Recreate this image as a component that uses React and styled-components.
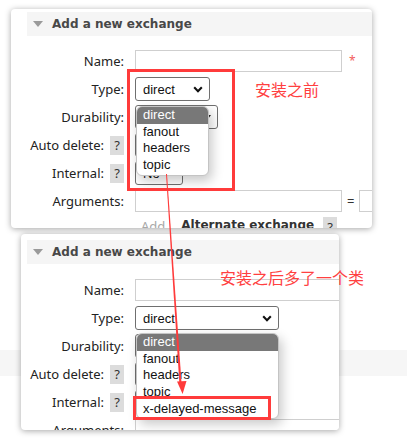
import React from 'react';
import styled, { createGlobalStyle } from 'styled-components';

const GlobalStyle = createGlobalStyle`
  html, body {
    margin: 0;
    padding: 0;
    background: #fff;
  }
  body {
    width: 407px;
    height: 447px;
    overflow: hidden;
  }
`;

const Canvas = styled.div`
  position: relative;
  width: 407px;
  height: 447px;
  overflow: hidden;
  background: #fff;
  font-family: "Noto Sans", "Liberation Sans", sans-serif;
`;

// strip of the page behind the second capture
const PageBand = styled.div`
  position: absolute;
  left: 0;
  right: 0;
  top: 350px;
  height: 26px;
  background: #f6f6f6;
`;

// one pasted capture of the management page
const Shot = styled.section`
  position: absolute;
  left: ${p => p.$x}px;
  top: ${p => p.$y}px;
  width: ${p => p.$w}px;
  height: ${p => p.$h}px;
  box-sizing: border-box;
  background: #fff;
  border-radius: 4px;
  box-shadow: 0 1px 6px rgba(0, 0, 0, 0.35);
  overflow: hidden;
`;

const Header = styled.h2`
  margin: ${p => p.$top}px 0 0 ${p => p.$left}px;
  height: 24px;
  display: flex;
  align-items: center;
  gap: 9px;
  padding-left: 6px;
  background: #f5f5f5;
  font: bold 12px "DejaVu Sans", Verdana, sans-serif;
  color: #484848;
  white-space: nowrap;
`;

const Caret = styled.span`
  width: 0;
  height: 0;
  border-left: 5px solid transparent;
  border-right: 5px solid transparent;
  border-top: 6px solid #9a9a9a;
`;

const Form = styled.div`
  display: grid;
  grid-template-columns: ${p => p.$labelW}px 1fr;
  column-gap: 11px;
  grid-auto-rows: 28px;
  padding-top: ${p => p.$pad}px;
`;

const Label = styled.div`
  display: flex;
  justify-content: flex-end;
  align-items: center;
  gap: 6px;
  font-size: 13px;
  color: #222;
  white-space: nowrap;
`;

const Field = styled.div`
  display: flex;
  align-items: center;
  gap: ${p => p.$gap || 0}px;
  white-space: nowrap;
`;

const AddRow = styled(Field)`
  align-items: flex-start;
  margin-top: 2px;
`;

const Help = styled.span`
  display: inline-flex;
  align-items: center;
  justify-content: center;
  width: 14px;
  height: 19px;
  background: #dcdcdc;
  color: #333;
  font-size: 13px;
`;

const TextBox = styled.div`
  flex: none;
  width: ${p => p.$w}px;
  height: 22px;
  box-sizing: border-box;
  border: 1px solid #cfcfcf;
  background: #fff;
`;

const Required = styled.span`
  color: #f25c5c;
  font-size: 12px;
  align-self: flex-start;
  margin-top: 5px;
`;

const Equals = styled.span`
  font-size: 13px;
  color: #333;
`;

const Pick = styled.div`
  flex: none;
  width: ${p => p.$w}px;
  height: 24px;
  box-sizing: border-box;
  border: 1px solid #6f6f6f;
  border-radius: 3px;
  background: #fff;
  display: flex;
  align-items: center;
  justify-content: space-between;
  padding: 0 6px 0 7px;
  font: 13px "Liberation Sans", Arial, sans-serif;
  color: #111;
`;

const SmallArrow = styled.span`
  width: 0;
  height: 0;
  border-left: 3px solid transparent;
  border-right: 3px solid transparent;
  border-top: 4px solid #222;
`;

const AddLink = styled.span`
  margin-left: 6px;
  color: #a8a8a8;
  font-size: 13px;
`;

const SubTitle = styled.span`
  margin-left: 16px;
  margin-right: 9px;
  margin-top: 1px;
  font: bold 12px "DejaVu Sans", Verdana, sans-serif;
  color: #333;
`;

const Menu = styled.ul`
  position: absolute;
  left: ${p => p.$x}px;
  top: ${p => p.$y}px;
  width: ${p => p.$w}px;
  box-sizing: border-box;
  margin: 0;
  padding: 0 0 1px;
  list-style: none;
  background: #fff;
  border: 1px solid #c4c4c4;
  border-radius: 6px;
  box-shadow: 3px 5px 12px rgba(0, 0, 0, 0.22);
  overflow: hidden;
  font: 13px "Liberation Sans", Arial, sans-serif;
`;

const Option = styled.li`
  height: 16.7px;
  line-height: 16.7px;
  padding-left: 6px;
  background: ${p => (p.$active ? '#787878' : 'transparent')};
  color: ${p => (p.$active ? '#fff' : '#111')};
`;

const Mark = styled.div`
  position: absolute;
  left: ${p => p.$x}px;
  top: ${p => p.$y}px;
  width: ${p => p.$w}px;
  height: ${p => p.$h}px;
  box-sizing: border-box;
  border: 3px solid #ff3b3b;
`;

const Note = styled.div`
  position: absolute;
  left: ${p => p.$x}px;
  top: ${p => p.$y}px;
  font: 16px/1 "Noto Sans CJK SC", "Noto Sans", sans-serif;
  color: #ff4040;
  white-space: nowrap;
`;

const Overlay = styled.svg`
  position: absolute;
  left: 0;
  top: 0;
  pointer-events: none;
`;

function Chevron() {
  return (
    <svg width="10" height="7" viewBox="0 0 10 7">
      <path d="M1.2 1.3 L5 5.2 L8.8 1.3" fill="none" stroke="#111" strokeWidth="2.1" />
    </svg>
  );
}

function Select({ w, value, small }) {
  return (
    <Pick $w={w}>
      <span>{value}</span>
      {small ? <SmallArrow /> : <Chevron />}
    </Pick>
  );
}

function Dropdown({ x, y, w, items }) {
  return (
    <Menu $x={x} $y={y} $w={w}>
      {items.map((it, i) => (
        <Option key={it} $active={i === 0}>{it}</Option>
      ))}
    </Menu>
  );
}

const baseTypes = ['direct', 'fanout', 'headers', 'topic'];

export default function App() {
  return (
    <Canvas>
      <GlobalStyle />
      <PageBand />

      <Shot $x={11} $y={9} $w={361} $h={219}>
        <Header $top={3} $left={16}>
          <Caret />
          Add a new exchange
        </Header>
        <Form $labelW={113} $pad={11}>
          <Label>Name:</Label>
          <Field $gap={7}>
            <TextBox $w={207} />
            <Required>*</Required>
          </Field>

          <Label>Type:</Label>
          <Field>
            <Select w={75} value="direct" />
          </Field>

          <Label>Durability:</Label>
          <Field>
            <Select w={83} value="Durable" small />
          </Field>

          <Label>Auto delete: <Help>?</Help></Label>
          <Field>
            <Select w={48} value="No" small />
          </Field>

          <Label>Internal: <Help>?</Help></Label>
          <Field>
            <Select w={48} value="No" small />
          </Field>

          <Label>Arguments:</Label>
          <Field $gap={5}>
            <TextBox $w={207} />
            <Equals>=</Equals>
            <TextBox $w={60} />
          </Field>

          <div />
          <AddRow>
            <AddLink>Add</AddLink>
            <SubTitle>Alternate exchange</SubTitle>
            <Help>?</Help>
          </AddRow>
        </Form>
        <Dropdown x={125} y={97} w={73} items={baseTypes} />
      </Shot>

      <Shot $x={21} $y={234} $w={318} $h={196}>
        <Header $top={6} $left={6}>
          <Caret />
          Add a new exchange
        </Header>
        <Form $labelW={103} $pad={12}>
          <Label>Name:</Label>
          <Field>
            <TextBox $w={230} />
          </Field>

          <Label>Type:</Label>
          <Field>
            <Select w={144} value="direct" />
          </Field>

          <Label>Durability:</Label>
          <Field>
            <Select w={83} value="Durable" small />
          </Field>

          <Label>Auto delete: <Help>?</Help></Label>
          <Field>
            <Select w={48} value="No" small />
          </Field>

          <Label>Internal: <Help>?</Help></Label>
          <Field>
            <Select w={48} value="No" small />
          </Field>

          <Label>Arguments:</Label>
          <Field>
            <TextBox $w={230} />
          </Field>
        </Form>
        <Dropdown x={115} y={99} w={143} items={[...baseTypes, 'x-delayed-message']} />
      </Shot>

      <Mark $x={127} $y={69} $w={108} $h={122} />
      <Note $x={255} $y={81}>安装之前</Note>

      <Note $x={220} $y={269}>安装之后多了一个类</Note>
      <Mark $x={133} $y={396} $w={138} $h={24} />

      <Overlay width="407" height="447" viewBox="0 0 407 447">
        <polygon points="166,174 167,174 181.6,384 179.4,384" fill="#ff3b3b" />
        <polygon points="182.6,394 177,381.5 186.5,381" fill="#ff3b3b" />
      </Overlay>
    </Canvas>
  );
}
